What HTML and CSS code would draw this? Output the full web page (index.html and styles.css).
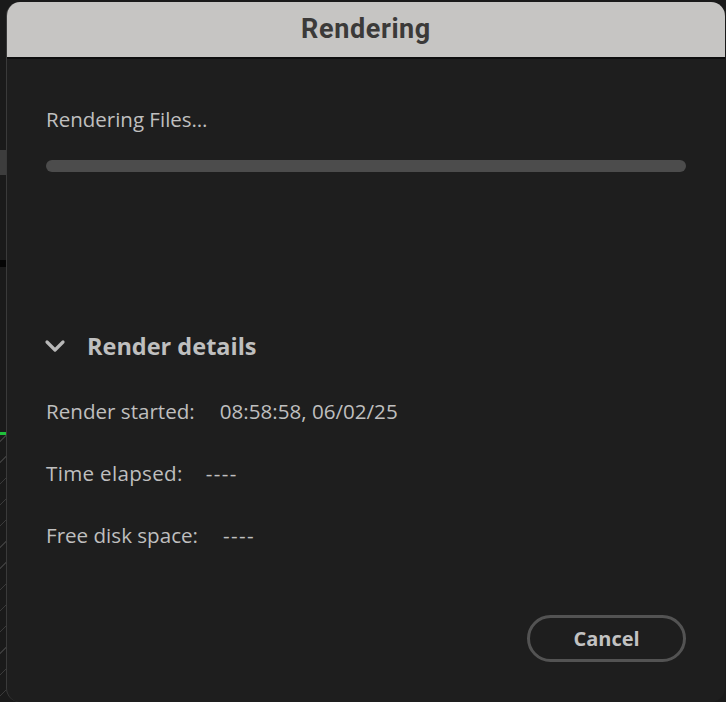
FILE: index.html
```html
<!DOCTYPE html>
<html>
<head>
<meta charset="utf-8">
<link rel="stylesheet" href="styles.css">
</head>
<body>
<div class="screen">
  <div class="backdrop">
    <div class="bd-gap bd-g1"></div>
    <div class="bd-grey"></div>
    <div class="bd-gap bd-g2"></div>
    <div class="bd-black"></div>
    <div class="bd-gap bd-g3"></div>
    <div class="bd-green"></div>
    <div class="bd-dash"></div>
  </div>
  <div class="dialog">
    <div class="titlebar">Rendering</div>
    <div class="content">
      <div class="status">Rendering Files…</div>
      <div class="progress"></div>
      <div class="details-head">
        <svg class="chevron" width="22" height="14" viewBox="0 0 22 14"><path d="M3 3 L11 11 L19 3" fill="none" stroke="#b8b8b8" stroke-width="3.2" stroke-linecap="round" stroke-linejoin="round"/></svg>
        <span class="details-title">Render details</span>
      </div>
      <div class="row"><span class="label">Render started:</span><span class="value">08:58:58, 06/02/25</span></div>
      <div class="row"><span class="label elapsed">Time elapsed:</span><span class="value dashes v2">----</span></div>
      <div class="row"><span class="label">Free disk space:</span><span class="value dashes">----</span></div>
      <div class="actions"><button class="cancel">Cancel</button></div>
    </div>
  </div>
</div>
</body>
</html>
```
FILE: styles.css
```css
html, body {
  margin: 0;
  padding: 0;
  background: #1a1a1a;
}
.screen {
  width: 726px;
  height: 702px;
  display: flex;
  overflow: hidden;
}
.backdrop {
  width: 6px;
  flex: none;
  display: flex;
  flex-direction: column;
}
.bd-g1 { height: 150px; }
.bd-grey { height: 25px; background: #3d3d3d; }
.bd-g2 { height: 85px; }
.bd-black { height: 7px; background: #050505; }
.bd-g3 { height: 165px; }
.bd-green { height: 3px; background: #1fbf3a; }
.bd-dash {
  flex: 1;
  background: repeating-linear-gradient(135deg, #1a1a1a 0 4px, #3a3a3a 4px 5px, #1a1a1a 5px 15px);
}
.dialog {
  flex: 1;
  margin-top: 2px;
  margin-right: 1px;
  height: 700px;
  background: #1e1e1e;
  border-left: 1px solid #3a3a3a;
  border-radius: 14px;
  overflow: hidden;
  display: flex;
  flex-direction: column;
}
.titlebar {
  flex: none;
  height: 57px;
  box-sizing: border-box;
  background: #c6c5c3;
  border-bottom: 2px solid #0e0e0e;
  display: flex;
  align-items: center;
  justify-content: center;
  font-family: Roboto, "Liberation Sans", sans-serif;
  font-weight: 700;
  font-size: 27px;
  letter-spacing: 0.6px;
  color: #3b3a39;
  padding-bottom: 1px;
}
.content {
  padding: 0 39px;
  font-family: "Open Sans", "Noto Sans", sans-serif;
  color: #bfbfbf;
  display: flex;
  flex-direction: column;
}
.status {
  font-size: 20.5px;
  line-height: 28px;
  margin-top: 46px;
}
.progress {
  margin-top: 27px;
  height: 12px;
  border-radius: 6px;
  background: #4c4c4c;
}
.details-head {
  margin-top: 157px;
  display: flex;
  align-items: center;
  height: 34px;
}
.chevron {
  margin-left: -2px;
  margin-right: 21px;
}
.details-title {
  font-size: 23.5px;
  font-weight: 700;
  line-height: 34px;
}
.row {
  font-size: 20.6px;
  line-height: 28px;
  display: flex;
  margin-top: 34px;
}
.elapsed { letter-spacing: 0.3px; }
.value { margin-left: 25px; }
.v2 { margin-left: 23px; }
.dashes { letter-spacing: 1.4px; }
.actions {
  display: flex;
  justify-content: flex-end;
  margin-top: 66px;
}
.cancel {
  width: 159px;
  height: 47px;
  border: 3px solid #535353;
  border-radius: 24px;
  background: transparent;
  color: #c2c2c2;
  font-family: "Open Sans", "Noto Sans", sans-serif;
  font-weight: 700;
  font-size: 20px;
  margin-right: 0;
  padding: 0;
}
```
